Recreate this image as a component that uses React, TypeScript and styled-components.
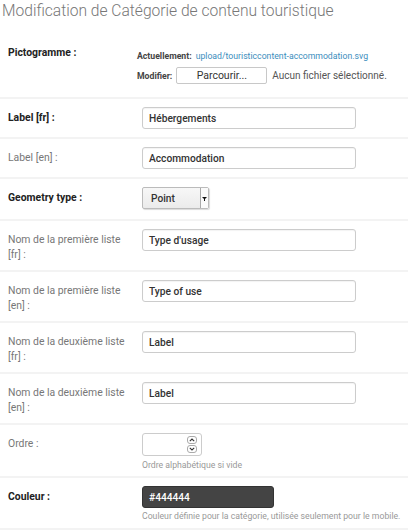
import React from 'react';
import styled, { createGlobalStyle } from 'styled-components';

const GlobalStyle = createGlobalStyle`
  body {
    margin: 0;
    background: #fff;
    font-family: Roboto, "Liberation Sans", Arial, sans-serif;
  }
`;

const Page = styled.div`
  width: 408px;
  padding: 0 0 0 2px;
  box-sizing: border-box;
`;

const Title = styled.h1`
  margin: 0;
  padding-top: 2px;
  height: 32px;
  font-size: 15.6px;
  line-height: 19px;
  font-weight: 300;
  color: #777;
`;

const Form = styled.div`
  margin-left: -2px;
`;

const Row = styled.div<{ $tail?: number }>`
  display: flex;
  align-items: flex-start;
  padding: 8px 0 ${(p) => p.$tail ?? 8}px 0;
  border-bottom: 2px solid #f3f3f3;
`;

const Label = styled.div<{ $strong?: boolean }>`
  width: 142px;
  box-sizing: border-box;
  padding: 3px 13px 0 8px;
  font-size: 10.4px;
  line-height: 15px;
  font-weight: ${(p) => (p.$strong ? 700 : 400)};
  color: ${(p) => (p.$strong ? '#222' : '#777')};
`;

const Field = styled.div`
  flex: 1;
  display: flex;
  flex-direction: column;
  align-items: flex-start;
`;

const TextInput = styled.div`
  width: 214px;
  height: 22px;
  box-sizing: border-box;
  border: 1px solid #ccc;
  border-radius: 3px;
  box-shadow: inset 0 1px 1px rgba(0, 0, 0, 0.05);
  padding: 0 6px;
  font-size: 10.2px;
  font-weight: 500;
  color: #333;
  display: flex;
  align-items: center;
`;

const FileWidget = styled.div`
  margin-left: -5px;
  margin-top: 6px;
  display: flex;
  flex-direction: column;
  gap: 3px;
`;

const FileLine = styled.div`
  display: flex;
  align-items: center;
  font-size: 8.7px;
  line-height: 16px;
  color: #555;
`;

const Small = styled.span`
  font-weight: 700;
  color: #444;
  margin-right: 4px;
`;

const Link = styled.a`
  color: #3b8dbd;
  text-decoration: none;
`;

const Browse = styled.button`
  width: 91px;
  height: 17px;
  padding: 0;
  margin-right: 5px;
  border: 1px solid #c8c8c8;
  border-radius: 2px;
  background: #fff;
  font-family: inherit;
  font-size: 10.5px;
  color: #333;
`;

const NoFile = styled.span`
  font-size: 10px;
  color: #555;
`;

const Select = styled.div`
  width: 67px;
  height: 22px;
  box-sizing: border-box;
  border: 1px solid #bbb;
  border-radius: 2px;
  background: linear-gradient(#f7f7f7, #ebebeb);
  box-shadow: 1px 1px 1px rgba(0, 0, 0, 0.15);
  display: flex;
  font-size: 10.2px;
  font-weight: 500;
  color: #333;
`;

const SelectText = styled.div`
  flex: 1;
  display: flex;
  align-items: center;
  padding-left: 8px;
`;

const SelectArrow = styled.div`
  width: 7px;
  border-left: 1px solid #aaa;
  background: #fafafa;
  display: flex;
  align-items: center;
  justify-content: center;
`;

const NumberInput = styled.div`
  width: 60px;
  height: 23px;
  box-sizing: border-box;
  border: 1px solid #ccc;
  border-radius: 3px;
  display: flex;
  justify-content: flex-end;
  align-items: center;
  padding-right: 4px;
`;

const Spinner = styled.div`
  display: flex;
  flex-direction: column;
  gap: 1px;
`;

const SpinBtn = styled.div`
  width: 10px;
  height: 8px;
  box-sizing: border-box;
  border: 1px solid #aaa;
  border-radius: 3px;
  display: flex;
  align-items: center;
  justify-content: center;
`;

const ColorInput = styled.div`
  width: 132px;
  height: 22px;
  box-sizing: border-box;
  border: 1px solid #333;
  border-radius: 3px;
  background: #444;
  color: #fff;
  font-size: 10.2px;
  font-weight: 500;
  padding: 0 6px;
  display: flex;
  align-items: center;
`;

const Hint = styled.div<{ $gap?: number }>`
  margin-top: ${(p) => p.$gap ?? 3}px;
  font-size: 8.7px;
  line-height: 12px;
  color: #999;
  white-space: nowrap;
`;

const Chevron = ({ up }: { up?: boolean }) => (
  <svg width="6" height="4" viewBox="0 0 6 4">
    <path
      d={up ? 'M0.8 3.2 L3 1 L5.2 3.2' : 'M0.8 0.8 L3 3 L5.2 0.8'}
      fill="none"
      stroke="#333"
      strokeWidth="1.1"
    />
  </svg>
);

const textRows: { label: string; value: string; strong?: boolean }[] = [
  { label: 'Label [fr] :', value: 'Hébergements', strong: true },
  { label: 'Label [en] :', value: 'Accommodation' },
];

const listRows = [
  { label: 'Nom de la première liste [fr] :', value: "Type d'usage" },
  { label: 'Nom de la première liste [en] :', value: 'Type of use' },
  { label: 'Nom de la deuxième liste [fr] :', value: 'Label' },
  { label: 'Nom de la deuxième liste [en] :', value: 'Label' },
];

export default function App() {
  return (
    <Page>
      <GlobalStyle />
      <Title>Modification de Catégorie de contenu touristique</Title>
      <Form>
        <Row $tail={13}>
          <Label $strong>Pictogramme :</Label>
          <Field>
            <FileWidget>
              <FileLine>
                <Small>Actuellement:</Small>
                <Link href="#">upload/touristiccontent-accommodation.svg</Link>
              </FileLine>
              <FileLine>
                <Small>Modifier:</Small>
                <Browse>Parcourir...</Browse>
                <NoFile>Aucun fichier sélectionné.</NoFile>
              </FileLine>
            </FileWidget>
          </Field>
        </Row>
        {textRows.map((r) => (
          <Row key={r.label}>
            <Label $strong={r.strong}>{r.label}</Label>
            <Field>
              <TextInput>{r.value}</TextInput>
            </Field>
          </Row>
        ))}
        <Row $tail={10}>
          <Label $strong>Geometry type :</Label>
          <Field>
            <Select>
              <SelectText>Point</SelectText>
              <SelectArrow>
                <svg width="5" height="5" viewBox="0 0 5 5">
                  <path d="M0 1 L5 1 L2.5 3.6 Z" fill="#111" />
                  <rect x="2" y="3" width="1" height="2" fill="#111" />
                </svg>
              </SelectArrow>
            </Select>
          </Field>
        </Row>
        {listRows.map((r) => (
          <Row key={r.label}>
            <Label>{r.label}</Label>
            <Field>
              <TextInput>{r.value}</TextInput>
            </Field>
          </Row>
        ))}
        <Row $tail={5}>
          <Label>Ordre :</Label>
          <Field>
            <NumberInput>
              <Spinner>
                <SpinBtn>
                  <Chevron up />
                </SpinBtn>
                <SpinBtn>
                  <Chevron />
                </SpinBtn>
              </Spinner>
            </NumberInput>
            <Hint>Ordre alphabétique si vide</Hint>
          </Field>
        </Row>
        <Row $tail={6}>
          <Label $strong>Couleur :</Label>
          <Field>
            <ColorInput>#444444</ColorInput>
            <Hint $gap={2}>
              Couleur définie pour la catégorie, utilisée seulement pour le mobile.
            </Hint>
          </Field>
        </Row>
      </Form>
    </Page>
  );
}
